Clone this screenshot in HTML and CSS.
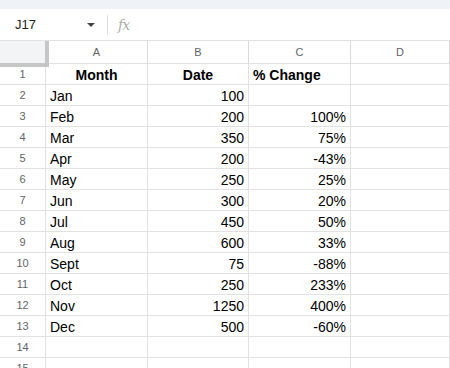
FILE: index.html
```html
<!DOCTYPE html>
<html lang="en">
<head>
    <meta charset="UTF-8">
    <title>Sheet</title>
    <link rel="stylesheet" href="styles.css">
</head>
<body>
    <div class="top-strip"></div>
    <div class="formula-bar">
        <div class="name-box">J17</div>
        <svg class="caret" width="8" height="4" viewBox="0 0 8 4"><path d="M0 0h8L4 4z" fill="#444"/></svg>
        <div class="sep"></div>
        <div class="fx">fx</div>
    </div>

    <div class="sheet">
        <div class="corner"></div>
        <div class="col-head">A</div>
        <div class="col-head">B</div>
        <div class="col-head">C</div>
        <div class="col-head">D</div>

        <div class="row-head">1</div>
        <div class="cell bold center">Month</div>
        <div class="cell bold center">Date</div>
        <div class="cell bold">% Change</div>
        <div class="cell"></div>

        <div class="row-head">2</div>
        <div class="cell">Jan</div>
        <div class="cell num">100</div>
        <div class="cell num"></div>
        <div class="cell"></div>

        <div class="row-head">3</div>
        <div class="cell">Feb</div>
        <div class="cell num">200</div>
        <div class="cell num">100%</div>
        <div class="cell"></div>

        <div class="row-head">4</div>
        <div class="cell">Mar</div>
        <div class="cell num">350</div>
        <div class="cell num">75%</div>
        <div class="cell"></div>

        <div class="row-head">5</div>
        <div class="cell">Apr</div>
        <div class="cell num">200</div>
        <div class="cell num">-43%</div>
        <div class="cell"></div>

        <div class="row-head">6</div>
        <div class="cell">May</div>
        <div class="cell num">250</div>
        <div class="cell num">25%</div>
        <div class="cell"></div>

        <div class="row-head">7</div>
        <div class="cell">Jun</div>
        <div class="cell num">300</div>
        <div class="cell num">20%</div>
        <div class="cell"></div>

        <div class="row-head">8</div>
        <div class="cell">Jul</div>
        <div class="cell num">450</div>
        <div class="cell num">50%</div>
        <div class="cell"></div>

        <div class="row-head">9</div>
        <div class="cell">Aug</div>
        <div class="cell num">600</div>
        <div class="cell num">33%</div>
        <div class="cell"></div>

        <div class="row-head">10</div>
        <div class="cell">Sept</div>
        <div class="cell num">75</div>
        <div class="cell num">-88%</div>
        <div class="cell"></div>

        <div class="row-head">11</div>
        <div class="cell">Oct</div>
        <div class="cell num">250</div>
        <div class="cell num">233%</div>
        <div class="cell"></div>

        <div class="row-head">12</div>
        <div class="cell">Nov</div>
        <div class="cell num">1250</div>
        <div class="cell num">400%</div>
        <div class="cell"></div>

        <div class="row-head">13</div>
        <div class="cell">Dec</div>
        <div class="cell num">500</div>
        <div class="cell num">-60%</div>
        <div class="cell"></div>

        <div class="row-head">14</div>
        <div class="cell"></div>
        <div class="cell"></div>
        <div class="cell"></div>
        <div class="cell"></div>

        <div class="row-head">15</div>
        <div class="cell"></div>
        <div class="cell"></div>
        <div class="cell"></div>
        <div class="cell"></div>
    </div>
</body>
</html>
```

FILE: styles.css
```css
body {
    margin: 0;
    padding: 0;
    background: #fff;
    font-family: 'Liberation Sans', Arial, sans-serif;
    overflow: hidden;
}

.top-strip {
    height: 9px;
    background: #eff3f8;
}

.formula-bar {
    height: 31px;
    display: flex;
    align-items: center;
    background: #fff;
}

.name-box {
    width: 72px;
    padding-left: 15px;
    font-size: 13px;
    color: #1f1f1f;
}

.sep {
    width: 1px;
    height: 20px;
    background: #dadce0;
    margin-left: 12px;
}

.fx {
    margin-left: 10px;
    font-family: 'DejaVu Serif', serif;
    font-style: italic;
    font-size: 14px;
    color: #adadad;
    letter-spacing: -1px;
}

.sheet {
    display: grid;
    grid-template-columns: 46px 102px 101px 102px 1fr;
    grid-template-rows: 23px repeat(15, 21px);
    border-top: 1px solid #e1e1e1;
}

.corner {
    background: #f3f4f5;
    border-right: 4px solid #c4c7c5;
    border-bottom: 4px solid #c4c7c5;
    margin-right: -3px;
    margin-bottom: -3px;
    position: relative;
    z-index: 2;
}

.col-head,
.row-head {
    background: #fff;
    color: #5f6368;
    font-size: 11px;
    display: flex;
    align-items: center;
    justify-content: center;
    border-right: 1px solid #e1e1e1;
    border-bottom: 1px solid #e1e1e1;
}

.col-head {
    border-right-color: #d9d9d9;
}

.cell {
    border-right: 1px solid #e2e2e2;
    border-bottom: 1px solid #e2e2e2;
    font-size: 14px;
    color: #000;
    padding: 1px 4px 0;
    display: flex;
    align-items: center;
    white-space: nowrap;
    overflow: hidden;
}

.cell.num {
    justify-content: flex-end;
}

.cell.center {
    justify-content: center;
}

.cell.bold {
    font-weight: bold;
}
```
